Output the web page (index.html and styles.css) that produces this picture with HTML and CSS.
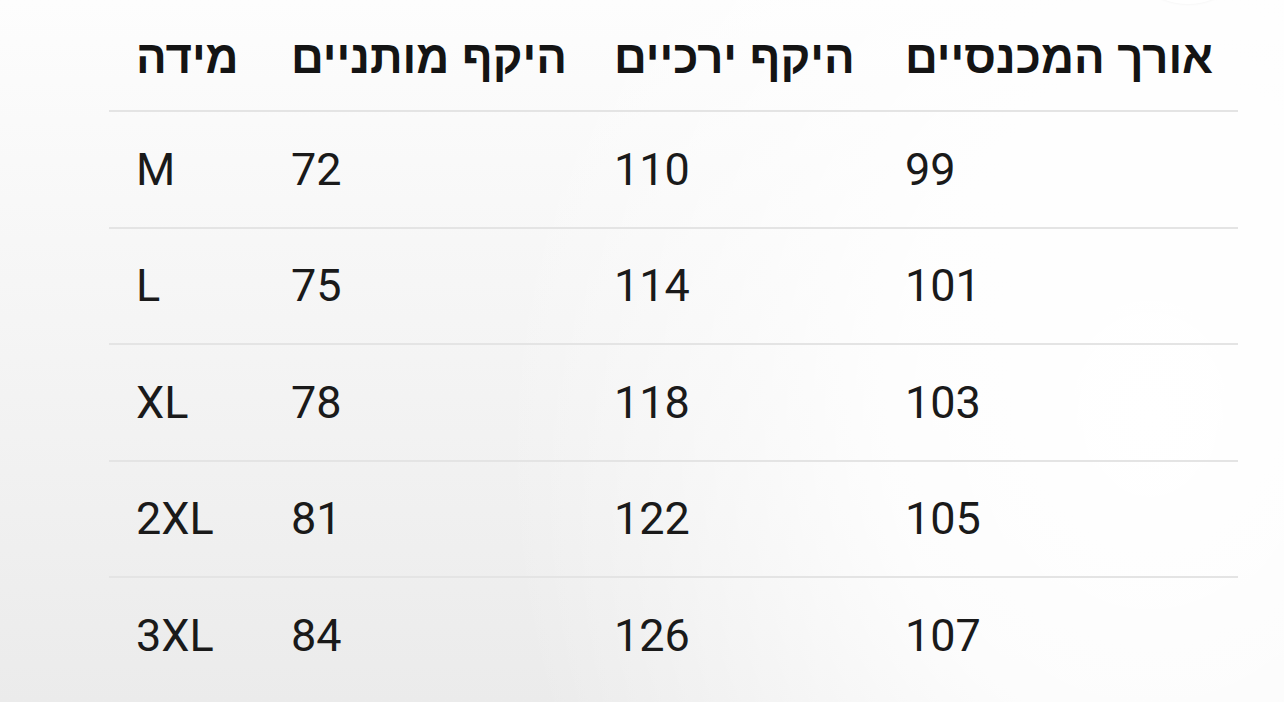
FILE: index.html
```html
<!DOCTYPE html>
<html lang="he">
<head>
<meta charset="utf-8">
<link rel="stylesheet" href="styles.css">
</head>
<body>
<div class="page">
  <div class="blob"></div>
  <div class="table">
    <div class="row head">
      <div class="cell">מידה</div>
      <div class="cell">היקף מותניים</div>
      <div class="cell">היקף ירכיים</div>
      <div class="cell">אורך המכנסיים</div>
    </div>
    <div class="row">
      <div class="cell">M</div><div class="cell">72</div><div class="cell">110</div><div class="cell">99</div>
    </div>
    <div class="row">
      <div class="cell">L</div><div class="cell">75</div><div class="cell">114</div><div class="cell">101</div>
    </div>
    <div class="row">
      <div class="cell">XL</div><div class="cell">78</div><div class="cell">118</div><div class="cell">103</div>
    </div>
    <div class="row">
      <div class="cell">2XL</div><div class="cell">81</div><div class="cell">122</div><div class="cell">105</div>
    </div>
    <div class="row last">
      <div class="cell">3XL</div><div class="cell">84</div><div class="cell">126</div><div class="cell">107</div>
    </div>
  </div>
</div>
</body>
</html>
```
FILE: styles.css
```css
html, body {
  margin: 0;
  padding: 0;
}
body {
  width: 1284px;
  height: 702px;
  overflow: hidden;
}
.page {
  position: relative;
  width: 1284px;
  height: 702px;
  overflow: hidden;
  background:
    radial-gradient(ellipse 650px 800px at 1150px 420px, rgba(255,255,255,1) 0%, rgba(255,255,255,0.85) 40%, rgba(255,255,255,0) 100%),
    linear-gradient(180deg, #fdfdfd 0%, #f6f6f6 40%, #ebebeb 100%);
  font-family: Roboto, "Liberation Sans", sans-serif;
  color: #1a1a1a;
}
.blob {
  position: absolute;
  left: 1120px;
  top: -132px;
  width: 136px;
  height: 136px;
  border-radius: 50%;
  background: #ffffff;
  box-shadow: 0 1px 2px rgba(0,0,0,0.03);
}
.table {
  position: relative;
  margin-left: 109px;
  width: 1129px;
}
.row {
  display: grid;
  grid-template-columns: 155px 323px 291px 360px;
  align-items: center;
  height: 114.5px;
  border-bottom: 2.5px solid #e4e4e4;
}
.row.head {
  height: 110px;
}
.row.last {
  border-bottom: none;
}
.cell {
  padding-left: 27px;
  font-size: 45px;
  line-height: 1;
  text-align: left;
  white-space: nowrap;
}
.head .cell {
  font-family: "Liberation Sans", "DejaVu Sans", sans-serif;
  font-weight: bold;
  font-size: 45.5px;
  color: #141414;
  padding-top: 5px;
}
```
